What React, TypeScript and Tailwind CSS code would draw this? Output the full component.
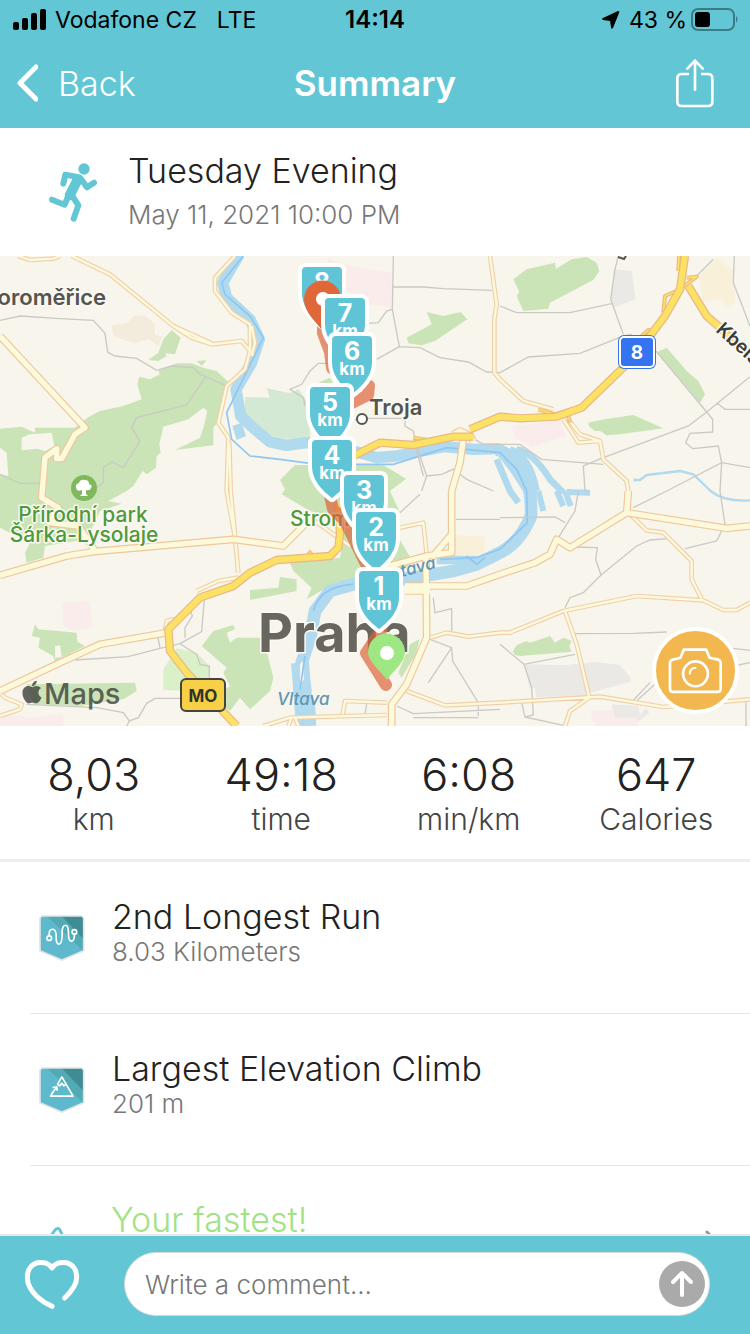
import React from "react";
import { FaApple } from "react-icons/fa";

const stats = [
  { value: "8,03", label: "km" },
  { value: "49:18", label: "time" },
  { value: "6:08", label: "min/km" },
  { value: "647", label: "Calories" },
];

const kmPins = [
  { n: 7, x: 345, y: 42 },
  { n: 6, x: 352, y: 80 },
  { n: 5, x: 330, y: 131 },
  { n: 4, x: 332, y: 184 },
  { n: 3, x: 364, y: 219 },
  { n: 2, x: 376, y: 256 },
  { n: 1, x: 379, y: 315 },
];

const parks = [
  "M0 518L65 512L105 530V515H225L262 485L300 465L370 450L425 430L412 385L418 362L450 370L480 355L475 345L530 322H575L610 335L650 345L685 378L660 490L640 515V568L525 582L600 545L612 510L622 465L610 455L565 490L490 512L478 565L482 590L470 600L468 635L440 655L428 645L400 690L380 705L325 735L365 743L300 765L260 850L135 870L130 905L80 920L75 890L90 860L0 815Z",
  "M445 312L475 290L490 250L515 222L542 245L525 295L495 292L500 300L475 315Z",
  "M590 315L620 313L605 330Z",
  "M1280 168L1330 180L1382 168L1402 190L1305 255L1265 268L1225 262L1220 245L1295 205Z",
  "M840 672L885 627H1150L1218 668L1170 705L1200 770L1190 835L1240 920L1190 950L1085 975L980 995L920 1030L935 995L880 945L870 920L1020 905L1040 790L930 765L845 715L855 700Z",
  "M955 380L990 365L1000 385Z",
  "M750 1002L835 995L840 963L890 970V1005L750 1032Z",
  "M605 1170L640 1125L700 1107L705 1120L680 1130L690 1160L710 1145H790L805 1205L820 1265L810 1305L750 1360L720 1325L690 1365L670 1350L680 1330L670 1305L690 1290L670 1250L680 1235Z",
  "M1230 1165L1258 1150L1250 1190L1205 1265L1195 1250Z",
  "M1540 70L1580 40L1665 20L1668 38L1715 10L1760 3L1790 20L1798 45L1780 72L1650 140L1645 158L1570 165L1550 120L1558 108Z",
  "M1972 288L2000 275L2060 345L2095 375L2115 415L2100 440Z",
  "M1765 500L1800 492L1900 477L1990 517L1860 535L1820 538L1800 525H1785L1768 512Z",
  "M1538 1187L1550 1167L1580 1155L1590 1160L1650 1140L1665 1160L1690 1145L1715 1155L1708 1170L1715 1187L1560 1200L1545 1197Z",
  "M95 1140L105 1105L115 1120L230 1130L232 1157L255 1170L165 1215L160 1200L115 1175L120 1145Z",
  "M80 1285L405 1280L410 1305L370 1330L240 1350L100 1345Z",
];

const clearings = [
  "M65 583V545L90 535L155 530L163 570L135 585L110 578Z",
  "M0 575L20 590L25 660L0 655Z",
  "M165 1170L180 1168L185 1203L165 1205Z",
];

const minorRoads = [
  "M0 193L60 180L180 188L280 193L315 232L323 288L345 300L410 307L470 343L515 330L580 335L600 355L675 387",
  "M615 365L560 447L410 485L395 515L420 555L370 635L335 617L310 635V680L290 695",
  "M0 655L60 682H120",
  "M225 1212L385 1202L480 1177L540 1163L590 1195L600 1225L628 1230V1265",
  "M473 1140L480 1177M555 1145V1115L577 1080L572 1067M540 1163L605 1127L613 1030",
  "M80 1345L290 1355L370 1370L388 1395L415 1385L440 1342L465 1327H540M388 1395L380 1410",
  "M1180 0L1177 160L1198 272L1130 310M1177 93H1270L1330 98L1475 103M1177 160L1160 165L1135 200L1105 202",
  "M1198 272L1260 275L1320 305L1405 318L1460 348L1500 350L1585 303L1740 292L1870 240L1895 235",
  "M985 322H955L930 345L905 385L870 400L910 425L915 450",
  "M1065 492L1105 487H1215V510L1240 525L1250 570L1280 660L1265 705M1240 545L1270 660M1280 660L1325 655L1360 640L1400 670L1480 705M1425 550L1450 565H1560L1625 610L1810 625",
  "M1500 150L1550 170H1710L1835 143M1855 0L1845 40L1832 130L1870 235",
  "M1968 285L2120 468L2138 490V528L2070 532L2057 560L2078 578L2155 570L2165 620L2160 705L2175 805L2150 855L2055 878",
  "M2250 362L2120 468L2065 510L1810 605L1750 630L1755 705M2150 440L2175 460H2250",
  "M2250 635L2165 620L2000 705L1900 755M2203 0L2200 80L2250 210M2090 60L2140 10",
  "M1500 785L1665 783L1695 800M1735 705L1725 765L1675 845M1720 873L1792 875L1787 910L1803 957L1750 1010L1710 1025L1695 1055M1803 957L1910 870L1950 852L2010 847",
  "M1725 1133L1900 1132L2000 1128M1500 1165L1572 1225L1725 1195M1572 1225L1595 1295L1600 1377L1575 1383L1565 1340M1575 1383L1690 1408M1900 1333L1950 1280M1912 1333L1965 1285M2200 1177L2250 1183M2200 1230L2250 1220M2238 1335V1410",
  "M1200 770L1260 715M1367 790H1500M1300 1025L1305 1070L1355 1058V1125M1290 1150L1355 1175L1358 1215L1435 1340V1380M1355 1175L1285 1280M1190 1350L1240 1373L1500 1360M1240 1385H1435M1095 1375L1100 1345",
];

const thinRoads = [
  "M55 0L90 12L160 8L180 0",
  "M215 0L330 55L520 210L575 245L635 265L725 255L750 285L735 340L680 390L655 500L685 545L680 705L705 845L715 950",
  "M688 560L692 705L706 845",
  "M705 0L645 65V105L695 170L750 205V290M520 210L635 262",
  "M590 1005L655 975L715 965",
  "M755 210L765 260L755 300",
  "M1470 0L1490 145L1483 190V350L1500 370L1570 435L1660 460",
  "M1690 490L1735 560L1800 555L1810 610L1880 675L1885 705",
  "M1705 490L1740 535L1800 555",
  "M930 785L1050 870M1200 815L1270 800L1280 895",
  "M0 1310L15 1325L65 1345L60 1360L0 1380",
  "M1290 1145L1340 1130L1405 1142L1500 1130H1530L1690 1065L1910 1020L2110 1033L2170 1062H2210L2250 1040",
  "M1885 770L1940 823L1990 830L2075 915V970L2105 1030",
  "M1220 1305L1335 1348L1500 1340L1800 1322L1990 1353L2250 1330",
  "M790 1410L870 1385L1160 1377M1028 1375L1035 1335L1160 1340M875 1385L865 1410M885 1385L895 1410",
  "M1695 1065L1730 1165L1768 1325L1710 1365L1695 1410",
  "M495 1125L500 1095L520 1090L530 1110",
];

const wideRoads = [
  "M0 240L255 515L225 535L185 608H170V578L135 605L125 725L175 755L150 800L235 810L285 885",
  "M0 958L200 900L280 887L700 850L850 870L900 820L930 790",
  "M0 1305L170 1225L300 1165L500 1130",
  "M1390 550L1380 620L1355 705V890L1280 900L1150 935M1355 835L1295 905",
  "M1278 900L1280 1145L1220 1285L1175 1345V1410",
  "M1215 1005H1290M1215 990H1400L1500 955L1605 920L1650 895L1670 850L1710 875L1880 770L2180 817L2250 810",
  "M1885 705L1880 770",
  "M1360 535L1380 525L1410 540L1420 555",
];

const ramps = [
  "M1990 170L1995 120L2040 100L2090 62L2060 65",
  "M2037 0L2035 45",
  "M1925 240L1945 222L1960 225",
  "M1240 545L1285 552",
  "M1615 460L1665 475L1720 458",
  "M1710 500L1705 480",
  "M925 885L950 910",
];

const motorways = [
  "M2055 0L2040 100L1995 180L1950 240L1880 325L1745 455L1670 482L1560 487L1500 482L1410 520",
  "M1420 542H1360L1240 567L1140 560L1050 605",
  "M1015 745L1020 835L1015 875L990 900L830 912L750 950L700 990L600 1025L505 1120L510 1185L560 1250L710 1410",
  "M2065 90L2120 180L2160 215L2250 300",
];

function Roads({ paths, casing, fill, width }: { paths: string[]; casing: string; fill: string; width: number }) {
  return (
    <g fill="none" strokeLinejoin="round">
      <path d={paths.join("")} stroke={casing} strokeWidth={width + 7} />
      <path d={paths.join("")} stroke={fill} strokeWidth={width} />
    </g>
  );
}

function KmPin({ n, x, y }: { n: number; x: number; y: number }) {
  return (
    <g transform={`translate(${x} ${y})`}>
      <path
        d="M-16 0H16Q20 0 20 4V26C20 41 9 51 0 58C-9 51 -20 41 -20 26V4Q-20 0 -16 0Z"
        fill="#5fc5d6"
        stroke="#fff"
        strokeWidth="8"
        strokeLinejoin="round"
        paintOrder="stroke"
      />
      <text y="24" textAnchor="middle" fill="#fff" className="text-[25px] font-bold">{n}</text>
      <text y="39" textAnchor="middle" fill="#fff" className="text-[17px] font-bold">km</text>
    </g>
  );
}

function RouteMap() {
  return (
    <svg viewBox="0 0 750 470" preserveAspectRatio="xMidYMid slice" className="block h-full w-full" role="img" aria-label="Route map">
      <rect width="750" height="470" fill="#f8f5ec" />
      {/* terrain, drawn on a grid three times finer */}
      <g transform="scale(.33333)">
        <path d={parks.join("")} fill="#cae4b8" />
        <path d={clearings.join("")} fill="#f8f5ec" />
        <path d="M735 423L810 425L800 397L870 412L895 400L930 450V550L850 548L800 540L735 480Z" fill="#d3e9d4" />
        <path d="M490 1240L530 1177L590 1190L628 1230V1265L560 1305L490 1302Z" fill="#daf0c8" />
        <path d="M187 1038L270 1035L278 1113L225 1125L190 1110ZM0 1380H75L80 1410H0ZM80 1385L190 1375V1410H75ZM978 5L1050 30L1175 50V155L1105 145L1030 100ZM1535 510L1680 495L1698 540L1595 573L1545 545ZM1770 1363H1840L1845 1385H1910L1915 1410H1785Z" fill="#f9ecea" />
        <path d="M1842 40L1895 45L1907 130L1840 155L1832 130ZM1575 1225L1690 1228L1785 1218L1860 1227L1892 1265L1890 1277L1770 1310L1760 1320L1608 1323L1605 1295H1588ZM1835 1345L1915 1350L1920 1375L1940 1355L1947 1373L1912 1397L1910 1385H1845Z" fill="#ebe9e5" />
        <path d="M2098 60L2150 5L2200 45L2205 140L2180 152L2165 128L2108 137ZM1360 837L1455 842L1452 895L1360 900Z" fill="#f8f0d9" />
        <path d="M335 208L385 200L400 180L435 178L465 205V235L487 242L475 270L445 250L400 262L340 240Z" fill="#f3ecdc" />

        {/* rivers */}
        <g fill="none" stroke="#b1daee" strokeLinejoin="round">
          <path d="M718 -5L668 80L680 125L750 190L778 250L755 320L708 400L722 480L765 520L810 558L860 568L920 560L1060 585L1130 605L1190 600L1330 572L1420 580L1500 578" strokeWidth="34" />
          <path d="M1490 580Q1530 590 1570 650Q1595 690 1593 780Q1560 860 1500 890L1430 925L1360 945L1220 968L1060 985L990 1005L945 1065L932 1140L905 1220V1265L925 1325L930 1410" strokeWidth="38" />
          <path d="M1310 912L1440 912L1500 885" strokeWidth="26" />
          <path d="M900 1220L905 1280L915 1410" strokeWidth="54" />
          <path d="M1500 590L1545 650L1580 705M1530 580Q1590 600 1610 705M1550 580Q1600 590 1650 670L1690 710M1490 610L1530 705L1555 740" strokeWidth="20" />
          <path d="M1615 705L1630 765M1670 705L1690 750M1695 705L1712 750M1700 708L1770 710" strokeWidth="18" />
          <path d="M1900 672H1920L1940 657L2040 645L2080 655L2132 705Q2170 738 2250 733" strokeWidth="7" />
        </g>
        <path d="M900 1225L908 1215L912 1270L900 1285ZM935 1270L950 1305L945 1335L935 1320Z" fill="#f8f5ec" />
        <path d="M697 510L725 500L738 540L710 552Z" fill="#b1daee" />
        <g fill="none" stroke="#8fc6f2" strokeWidth="5">
          <path d="M730 0L665 80L675 115L750 180L790 245L680 470L695 550L750 600L840 610L930 622L1070 625H1180L1340 575L1500 590L1550 640L1580 705L1582 800L1500 880" />
          <path d="M1500 880L1430 905L1320 910M1400 900L1430 925L1455 905M1060 985Q960 990 940 1065M915 1200L900 1300" />
        </g>

        <path d={minorRoads.join("")} fill="none" stroke="#cac9c4" strokeWidth="4" />
        <Roads paths={thinRoads} casing="#f0d0ac" fill="#fdfadc" width={7} />
        <Roads paths={wideRoads} casing="#eec79c" fill="#fdfadc" width={16} />
        <Roads paths={ramps} casing="#eeb97c" fill="#fbe164" width={5} />
        <Roads paths={motorways} casing="#ebb683" fill="#fbe164" width={18} />
      </g>

      {/* place names */}
      <g stroke="#fbf9f2" strokeWidth="3" strokeLinejoin="round" paintOrder="stroke">
        <text x="106" y="49" textAnchor="end" fill="#55544f" className="text-[22px] font-semibold">oroměřice</text>
        <text x="369" y="159" fill="#55544f" className="text-[22px] font-semibold">Troja</text>
        <text x="83" y="266" textAnchor="middle" fill="#4f9a3c" className="text-[21px] font-medium">Přírodní park</text>
        <text x="84" y="286" textAnchor="middle" fill="#4f9a3c" className="text-[21px] font-medium">Šárka-Lysolaje</text>
        <text x="290" y="270" fill="#4f9a3c" className="text-[21px] font-medium">Strom</text>
        <text x="258" y="396" fill="#69665f" className="text-[54px] font-bold">Praha</text>
        <text x="715" y="75" transform="rotate(42 715 75)" fill="#3b3b3b" className="text-[19px] font-semibold">Kbels</text>
      </g>
      <text x="277" y="449" fill="#6295b3" className="text-[17px] font-medium italic">Vltava</text>
      <text x="402" y="321" transform="rotate(-15 402 321)" fill="#6295b3" className="text-[17px] font-medium italic">tava</text>
      <path d="M618 1L624 3L626 0" fill="none" stroke="#55544f" strokeWidth="2" />
      <circle cx="362" cy="163" r="5" fill="#fff" stroke="#55544f" strokeWidth="2" />

      {/* nature park marker */}
      <circle cx="84" cy="232" r="13" fill="#80b95d" />
      <path d="M82 238V234Q77 236 76 232Q75 228 79 227Q80 223 85 224Q89 224 89 228Q93 229 91 232Q90 235 86 234V238L88 240H80Z" fill="#fff" />

      {/* road shields */}
      <rect x="618" y="79" width="38" height="34" rx="6" fill="#3573f0" />
      <rect x="620" y="81" width="34" height="30" rx="4" fill="none" stroke="#fff" strokeWidth="2" />
      <text x="637" y="103" textAnchor="middle" fill="#fff" className="text-[19px] font-bold">8</text>
      <rect x="181" y="423" width="44" height="32" rx="5" fill="#f7d046" stroke="#45443f" strokeWidth="2" />
      <text x="203" y="446" textAnchor="middle" fill="#33322e" className="text-[17px] font-bold">MO</text>

      {/* provider mark */}
      <g opacity=".8" fill="#3f403c" color="#3f403c">
        <FaApple x="19" y="423" size="26" />
        <text x="44" y="448" className="text-[29px] font-medium">Maps</text>
      </g>

      {/* run path */}
      <g fill="none" stroke="#dd6038" strokeOpacity=".68" strokeWidth="12" strokeLinejoin="round" strokeLinecap="round">
        <path d="M323 60V77L330 96L332 112L369 130L368 139L352 147L334 152L330 240L333 253L345 265L367 310L382 373L366 397L386 429" />
      </g>

      <KmPin n={8} x={322} y={11} />
      <path d="M322 74C316 66 304 56 304 43A18 18 0 1 1 341 43C341 56 329 66 322 74Z" fill="#e06737" />
      <circle cx="323" cy="43" r="7" fill="#fff" />
      {kmPins.map((pin) => (
        <KmPin key={pin.n} {...pin} />
      ))}
      <path d="M387 424C380 414 368 406 368 396A18 18 0 1 1 405 396C405 406 394 414 387 424Z" fill="#9fe783" />
      <circle cx="387" cy="397" r="7" fill="#fff" />
    </svg>
  );
}

function Badge({ children }: { children: React.ReactNode }) {
  return (
    <svg viewBox="117 74 139 139" className="h-[46px] w-[46px] shrink-0" fill="none" aria-hidden="true">
      <path d="M126 77H246L252 83V182L186 210L120 182V83Z" fill="#5fb9cd" />
      <path d="M142 78H248L251 82V180L249 181Z" fill="#52aab5" />
      <path d="M186 78H248L251 82V146Z" fill="#3f8c95" />
      <path d="M126 77H246L252 83V182L186 210L120 182V83Z" stroke="#e1e4e5" strokeWidth="5" />
      <g stroke="#fff" strokeWidth="5" strokeLinejoin="round" strokeLinecap="round">{children}</g>
    </svg>
  );
}

function Achievement({ title, detail, children }: { title: string; detail: string; children: React.ReactNode }) {
  return (
    <li className="ml-[30px] flex h-[152px] items-center gap-[27px] border-b border-[#e8e8e8] pl-[9px]">
      <Badge>{children}</Badge>
      <div className="pb-3">
        <h2 className="text-[34px] leading-10 font-light text-[#222]">{title}</h2>
        <p className="text-[26px] leading-[30px] font-light text-[#777]">{detail}</p>
      </div>
    </li>
  );
}

export default function App() {
  return (
    <div className="flex h-screen flex-col bg-white font-['Inter',sans-serif]">
      {/* Status bar and navigation */}
      <header className="shrink-0 bg-[#62c6d5]">
        <div className="grid h-10 grid-cols-3 items-center px-[11px] text-[23px] text-black">
          <div className="flex items-center gap-2 pl-0.5 whitespace-nowrap">
            <svg viewBox="0 0 34 22" className="h-[22px] w-[34px] shrink-0" aria-hidden="true">
              <rect x="0" y="13" width="6" height="8" rx="2" />
              <rect x="9" y="9" width="6" height="12" rx="2" />
              <rect x="18" y="4" width="6" height="17" rx="2" />
              <rect x="27" y="0" width="6" height="21" rx="2" />
            </svg>
            <span>Vodafone CZ</span>
            <span className="ml-3">LTE</span>
          </div>
          <div className="text-center text-[24px] font-semibold">14:14</div>
          <div className="flex items-center justify-end gap-1 whitespace-nowrap">
            <svg viewBox="0 0 20 20" className="mr-1 h-5 w-5" aria-hidden="true">
              <path d="M17 1Q19 1 18 3L12 18Q10 20 10 17L9 11L2 10Q0 9 2 8Z" />
            </svg>
            <span>43 %</span>
            <svg viewBox="0 0 48 24" className="h-6 w-12" aria-hidden="true">
              <rect x="1" y="1" width="42" height="21" rx="6" fill="none" stroke="#3c7b85" strokeWidth="2" />
              <rect x="4" y="4" width="15" height="15" rx="3" />
              <path d="M45 8Q48 11 45 15Z" fill="#3c7b85" />
            </svg>
          </div>
        </div>
        <nav className="grid h-[88px] grid-cols-3 items-center px-4 pb-0.5 text-[34px] text-white">
          <button type="button" className="flex items-center gap-5 justify-self-start font-light">
            <svg viewBox="0 0 22 38" className="h-[38px] w-[22px]" fill="none" stroke="currentColor" strokeWidth="5" strokeLinecap="round" strokeLinejoin="round" aria-hidden="true">
              <path d="M20 3L4 19L20 35" />
            </svg>
            Back
          </button>
          <h1 className="text-center text-[35px] font-semibold">Summary</h1>
          <button type="button" aria-label="Share" className="justify-self-end pr-[19px]">
            <svg viewBox="900 170 120 150" className="h-[50px] w-10" fill="none" stroke="currentColor" strokeWidth="8" strokeLinecap="round" strokeLinejoin="round">
              <path strokeLinecap="butt" d="M942 218H920Q907 218 907 231V301Q907 314 920 314H999Q1012 314 1012 301V231Q1012 218 999 218H978" />
              <path d="M960 265V178M937 202L960 178L983 202" />
            </svg>
          </button>
        </nav>
      </header>

      <main className="min-h-0 flex-1 overflow-y-auto [scrollbar-width:none]">
        {/* Activity title */}
        <section className="flex h-32 items-center gap-[30px] pl-12">
          <svg viewBox="145 488 150 180" className="h-[60px] w-[50px] shrink-0" fill="none" stroke="#62c6d5" strokeWidth="18" strokeLinecap="round" strokeLinejoin="round" aria-hidden="true">
            <circle cx="253" cy="509" r="17" fill="#62c6d5" stroke="none" />
            <path d="M191 553L197 526L240 534L262 564L283 550" />
            <path d="M232 545L210 588" strokeWidth="30" />
            <path d="M206 590L195 616L157 601M215 585L236 618L222 658" />
          </svg>
          <div>
            <h2 className="text-[34px] leading-[46px] font-light text-[#222]">Tuesday Evening</h2>
            <p className="text-[26px] leading-[42px] font-light text-[#777]">May 11, 2021 10:00 PM</p>
          </div>
        </section>

        {/* Map */}
        <section className="relative h-[470px] overflow-hidden">
          <RouteMap />
          <button type="button" aria-label="Add photo" className="absolute right-[11px] bottom-3 flex h-[87px] w-[87px] items-center justify-center rounded-full border-4 border-white bg-[#f2b84f]">
            <svg viewBox="508 460 164 140" className="h-[47px] w-[55px]" fill="none" stroke="#fff" strokeWidth="8" strokeLinejoin="round" strokeLinecap="round">
              <path d="M514 508Q514 499 525 497L545 492L555 468H622L632 492L655 497Q665 499 665 508V585Q665 594 655 594H524Q514 594 514 585Z" />
              <circle cx="590" cy="540" r="37" />
              <path d="M573 540Q573 523 590 522" strokeWidth="6" />
            </svg>
          </button>
        </section>

        {/* Totals */}
        <dl className="grid grid-cols-4 border-b-[3px] border-[#eeeeee] pt-6 pb-[21px] text-center">
          {stats.map((s) => (
            <div key={s.label} className="flex flex-col-reverse">
              <dt className="text-[30px] leading-[38px] font-light text-[#444]">{s.label}</dt>
              <dd className="text-[45px] leading-[50px] font-light text-[#222]">{s.value}</dd>
            </div>
          ))}
        </dl>

        {/* Achievements */}
        <ul>
          <Achievement title="2nd Longest Run" detail="8.03 Kilometers">
            <circle cx="148" cy="144" r="7" />
            <circle cx="224" cy="125" r="7" />
            <path d="M148 137Q146 117 158 117Q169 117 169 140Q168 162 177 162Q187 162 187 130Q186 105 197 105Q206 105 206 130Q206 153 215 153Q224 153 224 132" />
          </Achievement>
          <Achievement title="Largest Elevation Climb" detail="201 m">
            <path d="M160 148L152 162H220L186 104L173 126L180 131L186 123L192 131L199 126" />
            <path d="M158 152L170 135M160 136L171 134L172 144" />
          </Achievement>
          <li className="ml-[30px] flex gap-[26px] pt-[34px] pr-8 pb-8 pl-[9px]">
            <svg viewBox="0 0 46 46" className="mt-6 h-[46px] w-[46px] shrink-0" fill="none" stroke="#62c6d5" strokeWidth="3" strokeLinecap="round" strokeLinejoin="round" aria-hidden="true">
              <path d="M8 18L16 6Q19 3 21 6L30 26L24 42" />
            </svg>
            <a href="#fastest" className="flex flex-1 items-start justify-between text-[34px] leading-10 font-light text-[#a0e284]">
              Your fastest!
              <svg viewBox="0 0 14 24" className="mt-[29px] h-6 w-3.5" fill="none" stroke="#999" strokeWidth="3" strokeLinecap="round" aria-hidden="true">
                <path d="M3 3L12 12L3 21" />
              </svg>
            </a>
          </li>
        </ul>
      </main>

      {/* Comment bar */}
      <footer className="flex h-[100px] shrink-0 items-center gap-11 border-t-2 border-[#e6eaea] bg-[#62c6d5] pr-10 pb-0.5 pl-6">
        <button type="button" aria-label="Like">
          <svg viewBox="72 205 168 153" className="h-[51px] w-14" fill="none" stroke="#fff" strokeWidth="15" strokeLinecap="round" strokeLinejoin="round">
            <path d="M156 347C130 335 82 305 82 260C82 208 140 205 156 232C172 205 230 208 230 260C230 285 212 305 194 322" />
          </svg>
        </button>
        <form className="flex h-16 flex-1 items-center rounded-full border border-[#d5dadb] bg-white pr-1 pl-5" onSubmit={(e) => e.preventDefault()}>
          <input type="text" aria-label="Comment" placeholder="Write a comment..." className="min-w-0 flex-1 bg-transparent text-[26px] font-light text-[#222] outline-none placeholder:text-[#777]" />
          <button type="submit" aria-label="Send" className="flex h-[46px] w-[46px] items-center justify-center rounded-full bg-[#aaaaaa]">
            <svg viewBox="0 0 24 28" className="h-7 w-6" fill="none" stroke="#fff" strokeWidth="4" strokeLinecap="round" strokeLinejoin="round">
              <path d="M12 25V3M3 12L12 3L21 12" />
            </svg>
          </button>
        </form>
      </footer>
    </div>
  );
}
